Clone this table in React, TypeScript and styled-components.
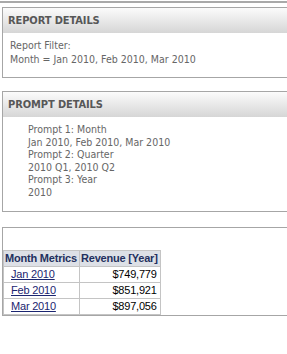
import React from "react"
import styled, { createGlobalStyle } from "styled-components"

const GlobalStyle = createGlobalStyle`
  body {
    margin: 0;
    background: #ffffff;
    overflow: hidden;
    font-family: "DejaVu Sans Condensed", "Liberation Sans", sans-serif;
  }
`

const Page = styled.div`
  width: 287px;
  height: 354px;
  overflow: hidden;
`

const TopRule = styled.div`
  height: 1px;
  border-bottom: 2px solid #a9a9a9;
  width: 400px;
  margin-bottom: 4px;
`

const Box = styled.div<{ $gap?: number }>`
  width: 400px;
  margin-left: 2px;
  margin-top: ${(p) => p.$gap ?? 0}px;
  border: 1px solid #a6a6a6;
  border-right: none;
  background: #fff;
`

const Header = styled.div`
  height: 25px;
  display: flex;
  align-items: center;
  padding-left: 5px;
  background: linear-gradient(#fbfbfb, #d6d6d6);
  font-size: 11px;
  font-weight: bold;
  color: #575757;
  letter-spacing: -0.1px;
`

const Body = styled.div<{ $indent: number; $lh: number; $pt: number; $pb: number }>`
  padding: ${(p) => p.$pt}px 0 ${(p) => p.$pb}px ${(p) => p.$indent}px;
  font-size: 10.5px;
  line-height: ${(p) => p.$lh}px;
  color: #666666;
`

const Grid = styled.table`
  border-collapse: collapse;
  margin: 22px 0 0 0;
  border: 1px solid #c4c4c4;
  font-family: "Liberation Sans", Arial, sans-serif;
  font-size: 11px;
  letter-spacing: -0.2px;
`

const Th = styled.th`
  background: #dde0e6;
  color: #23305e;
  font-weight: bold;
  text-align: left;
  padding: 0 2px 0 1px;
  height: 15px;
  border: 1px solid #c4c4c4;
  white-space: nowrap;
`

const Td = styled.td<{ $right?: boolean }>`
  border: 1px solid #c4c4c4;
  height: 15px;
  padding: 0 ${(p) => (p.$right ? "3px" : "2px")} 0 ${(p) => (p.$right ? "2px" : "7px")};
  text-align: ${(p) => (p.$right ? "right" : "left")};
  color: #000;
`

const MonthLink = styled.a`
  color: #1b2570;
  text-decoration: underline;
`

const rows = [
  { month: "Jan 2010", revenue: "$749,779" },
  { month: "Feb 2010", revenue: "$851,921" },
  { month: "Mar 2010", revenue: "$897,056" },
]

const App: React.FC = () => {
  return (
    <>
      <GlobalStyle />
      <Page>
        <TopRule />
        <Box>
          <Header>REPORT DETAILS</Header>
          <Body $indent={7} $lh={14} $pt={5} $pb={11}>
            <div>Report Filter:</div>
            <div>Month = Jan 2010, Feb 2010, Mar 2010</div>
          </Body>
        </Box>
        <Box $gap={13}>
          <Header>PROMPT DETAILS</Header>
          <Body $indent={25} $lh={12.6} $pt={6} $pb={12}>
            <div>Prompt 1: Month</div>
            <div>Jan 2010, Feb 2010, Mar 2010</div>
            <div>Prompt 2: Quarter</div>
            <div>2010 Q1, 2010 Q2</div>
            <div>Prompt 3: Year</div>
            <div>2010</div>
          </Body>
        </Box>
        <Box $gap={15}>
          <Grid>
            <thead>
              <tr>
                <Th>Month Metrics</Th>
                <Th>Revenue [Year]</Th>
              </tr>
            </thead>
            <tbody>
              {rows.map((r) => (
                <tr key={r.month}>
                  <Td>
                    <MonthLink href="#">{r.month}</MonthLink>
                  </Td>
                  <Td $right>{r.revenue}</Td>
                </tr>
              ))}
            </tbody>
          </Grid>
        </Box>
      </Page>
    </>
  )
}

export default App
